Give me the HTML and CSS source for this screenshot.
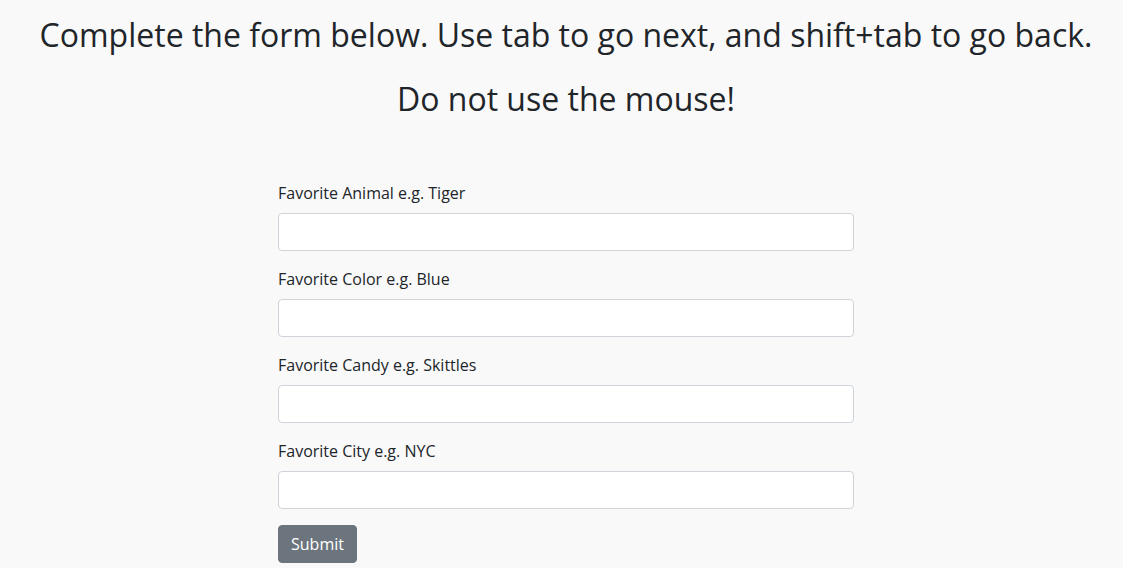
FILE: index.html
```html
<!DOCTYPE html>
<html>
<head>
<meta charset="utf-8">
<link rel="stylesheet" href="styles.css">
</head>
<body>
<div class="page">
  <h1 class="title">Complete the form below. Use tab to go next, and shift+tab to go back.</h1>
  <h1 class="title second">Do not use the mouse!</h1>
  <form class="form">
    <div class="group">
      <label class="label">Favorite Animal e.g. Tiger</label>
      <input class="input" type="text">
    </div>
    <div class="group">
      <label class="label">Favorite Color e.g. Blue</label>
      <input class="input" type="text">
    </div>
    <div class="group">
      <label class="label">Favorite Candy e.g. Skittles</label>
      <input class="input" type="text">
    </div>
    <div class="group">
      <label class="label">Favorite City e.g. NYC</label>
      <input class="input" type="text">
    </div>
    <button class="btn" type="button">Submit</button>
  </form>
</div>
</body>
</html>
```
FILE: styles.css
```css
html, body {
  margin: 0;
  padding: 0;
  background: #f9f9f9;
  font-family: "Open Sans", "Liberation Sans", sans-serif;
  color: #212529;
}
.page {
  display: flex;
  flex-direction: column;
  align-items: center;
  padding-top: 16px;
  padding-left: 9px;
}
.title {
  margin: 0;
  font-size: 32px;
  line-height: 38px;
  font-weight: 400;
  text-align: center;
}
.second {
  margin-top: 26px;
}
.form {
  width: 576px;
  margin-top: 63px;
  display: flex;
  flex-direction: column;
}
.group {
  display: flex;
  flex-direction: column;
  margin-bottom: 16px;
}
.label {
  font-size: 16px;
  line-height: 24px;
  margin-bottom: 8px;
}
.input {
  box-sizing: border-box;
  height: 38px;
  width: 100%;
  border: 1px solid #ced4da;
  border-radius: 4px;
  background: #fff;
  padding: 6px 12px;
  font-family: inherit;
  font-size: 16px;
}
.btn {
  align-self: flex-start;
  box-sizing: border-box;
  height: 38px;
  padding: 0 12px;
  border: 1px solid #6c757d;
  border-radius: 4px;
  background: #6c757d;
  color: #fff;
  font-family: inherit;
  font-size: 16px;
  line-height: 24px;
}
```
